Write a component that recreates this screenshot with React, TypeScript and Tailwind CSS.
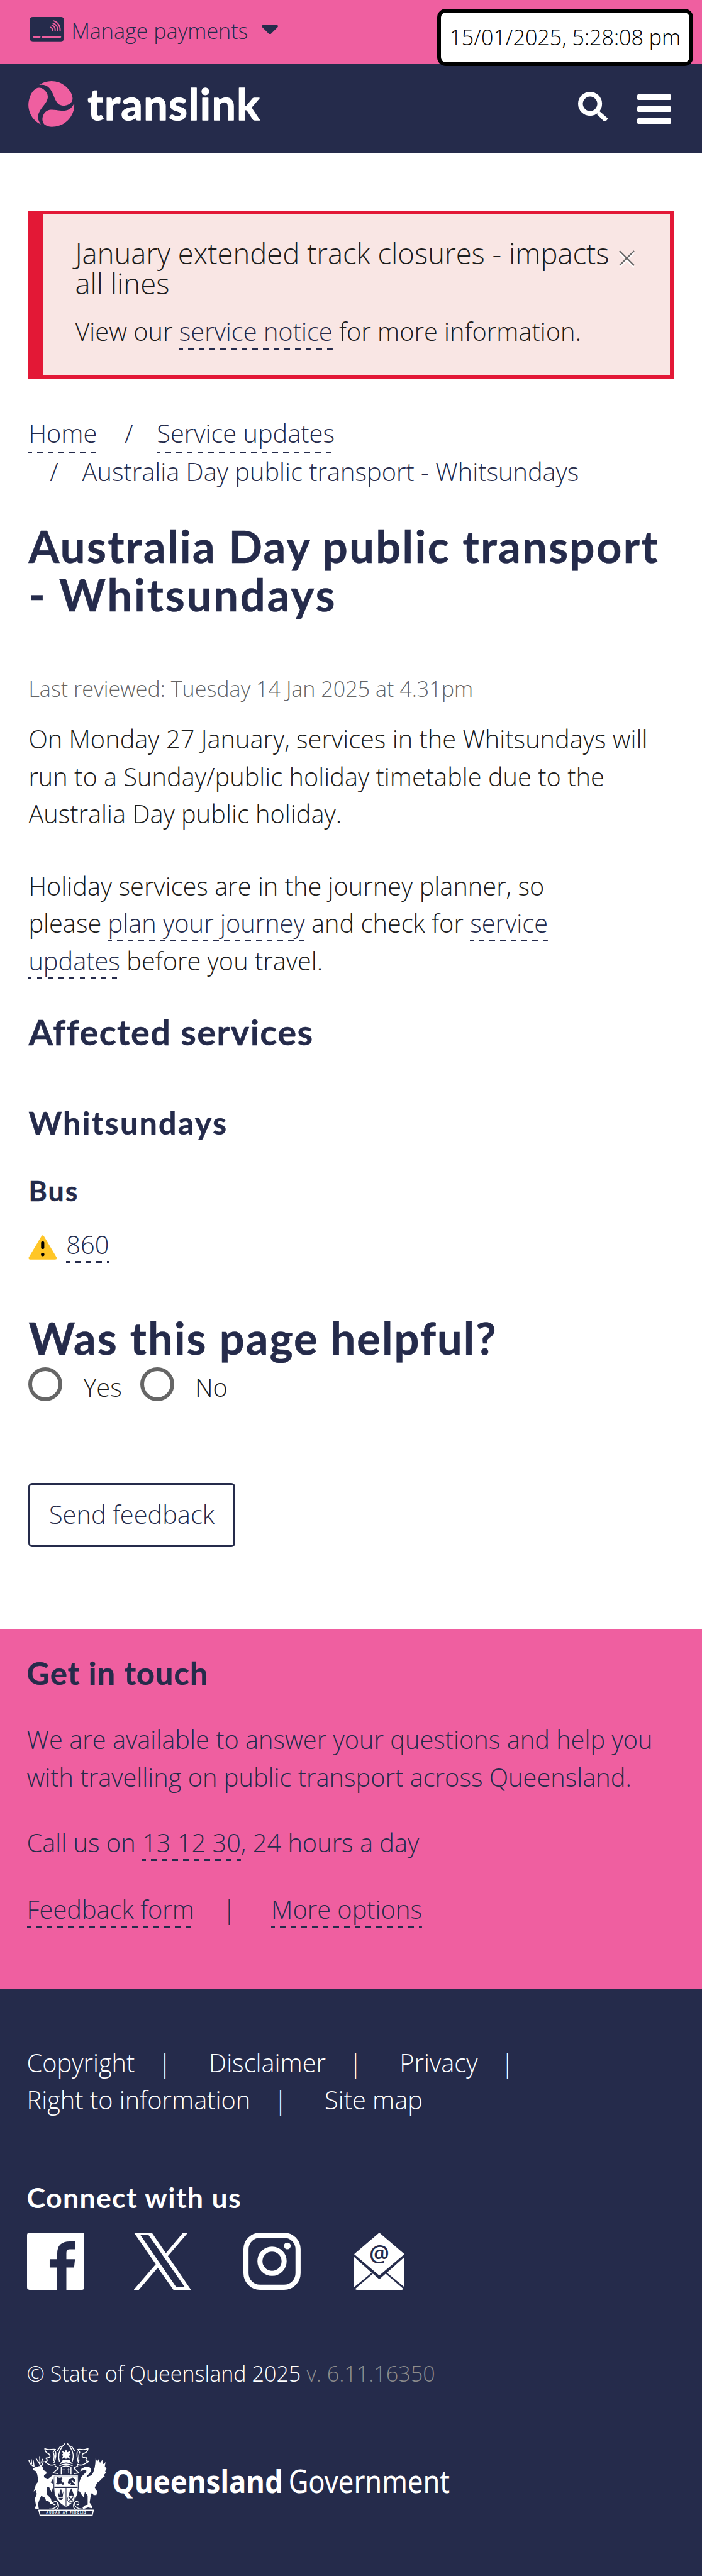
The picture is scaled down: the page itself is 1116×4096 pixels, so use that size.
import type { ReactNode } from "react";

function Link({ children }: { children: ReactNode }) {
  return (
    <a className="whitespace-nowrap bg-[repeating-linear-gradient(90deg,#252b4b_-2.8px_5.7px,transparent_5.7px_14.2px)] bg-[length:100%_3px] bg-bottom bg-no-repeat pb-[2px] text-[#252b4b]">
      {children}
    </a>
  );
}

function CardIcon() {
  return (
    <svg viewBox="0 0 175 123" className="mt-[27.2px] h-[38.8px] w-[55.2px] shrink-0">
      <rect width="175" height="123" rx="16" fill="#252b4b" />
      <g fill="none" stroke="#ef5fa0" strokeWidth="6" strokeLinecap="round">
        <path d="M21 101H52M64 101H156" strokeWidth="7" />
        <path d="M123 20C143 26 156 45 154 70M118 31C133 36 143 50 142 70M113 41C123 45 130 55 129 70M106 52C112 55 117 62 116 70" />
      </g>
    </svg>
  );
}

const BLADE = "M-62 -97C-22 -126 36 -122 72 -90C98 -66 107 -46 107 -27C106 -5 84 8 62 8C36 8 24 -10 14 -36C-2 -78 -18 -102 -62 -97Z";

function Logo() {
  return (
    <svg viewBox="0 0 390 80" className="h-[75.7px] w-[369.2px] overflow-visible" role="img">
      <g transform="translate(38.7 38.7) scale(0.333)" fill="#ef5fa0">
        <path d={BLADE} />
        <path d={BLADE} transform="rotate(120)" />
        <path d={BLADE} transform="rotate(240)" />
      </g>
      <text
        x="99.5"
        y="66"
        textLength="289"
        fontFamily="Lato, sans-serif"
        fontWeight="700"
        fontSize="72"
        fill="#fff"
        stroke="#fff"
        strokeWidth="1.4"
        strokeLinejoin="round"
      >
        translink
      </text>
    </svg>
  );
}

function Header() {
  return (
    <header>
      <div className="relative flex h-[102.2px] items-start bg-[#ef5fa0] pl-[47px] text-[#252b4b]">
        <CardIcon />
        <span className="ml-[11.2px] mt-[23.8px] text-[34.08px] leading-[51px]">Manage payments</span>
        <svg viewBox="0 0 83 46" className="ml-[21.8px] mt-[39.7px] h-[14.6px] w-[26.2px]">
          <path d="M5 0H78Q85 2 81 9L46 44Q41 48 37 44L2 9Q-2 2 5 0Z" fill="#252b4b" />
        </svg>
        <div className="absolute left-[694.8px] top-[14.2px] z-10 flex h-[90.9px] w-[407px] items-center justify-center whitespace-nowrap rounded-[14px] border-[6px] border-black bg-white pb-[1px] text-[34.08px] leading-[51px] text-black">
          15/01/2025, 5:28:08 pm
        </div>
      </div>
      <div className="flex h-[142px] items-start bg-[#252b4b] pl-[45.4px] pr-[49.2px]">
        <div className="mt-[27.2px]">
          <Logo />
        </div>
        <svg viewBox="0 0 150 150" className="ml-auto mt-[43.6px] h-[47.3px] w-[47.3px]">
          <circle cx="60.500" cy="60.500" r="48.500" fill="none" stroke="#fff" strokeWidth="24" />
          <path d="M107 97L150 134Q150 138 138 149Q134 152 130 148L97 115Q96 111 98 103Q103 98 107 97Z" fill="#fff" />
        </svg>
        <div className="ml-[47px] mt-[47.5px] flex w-[54px] flex-col gap-[10px]">
          <div className="h-[9.2px] rounded-[2px] bg-white" />
          <div className="h-[9.2px] rounded-[2px] bg-white" />
          <div className="h-[9.2px] rounded-[2px] bg-white" />
        </div>
      </div>
    </header>
  );
}

function Alert() {
  return (
    <section className="relative mt-[90.8px] h-[267px] border-[6px] border-l-[23px] border-[#e31836] bg-[#f9e6e4] pl-[51px] pt-[38.5px] text-[#1c1c1c]">
      <h2 className="whitespace-nowrap text-[45.44px] leading-[47.8px]">
        January extended track closures - impacts
        <br />
        all lines
      </h2>
      <p className="mt-[23px]">
        View our <Link>service notice</Link> for more information.
      </p>
      <svg viewBox="0 0 26 29" className="absolute right-[55.2px] top-[56.8px] h-[28px] w-[25px]">
        <path d="M1 4L25 28M25 4L1 28" stroke="#fff" strokeWidth="2.4" />
        <path d="M1 1L25 25M25 1L1 25" stroke="#666" strokeWidth="2.2" />
      </svg>
    </section>
  );
}

function WarningIcon() {
  return (
    <svg viewBox="0 0 48 41" className="mt-[14.200px] h-[38.8px] w-[45.7px]">
      <path d="M22 1.500Q24 -1 26 1.500L47.500 37.500Q48.500 41 45 41H3Q-.5 41 .5 37.500Z" fill="#ffc627" />
      <path d="M24 13V20.500" stroke="#000" strokeWidth="5.400" strokeLinecap="round" />
      <circle cx="24" cy="32.600" r="2.900" fill="#000" />
    </svg>
  );
}

function Radio({ label }: { label: string }) {
  return (
    <label className="flex items-start">
      <span className="h-[54px] w-[54px] rounded-full border-[6px] border-[#666]" />
      <span className="ml-[33px] mt-[3.5px]">{label}</span>
    </label>
  );
}

function Bar({ className }: { className: string }) {
  return <span className={className}>|</span>;
}

function CoatOfArms() {
  return (
    <svg viewBox="53 40 396 368" className="h-[116.2px] w-[125px] shrink-0" fill="#fff">
      <g fill="none" stroke="#fff" strokeWidth="5" strokeLinejoin="round">
        <path d="M90 164C72 158 60 146 56 128M70 148L68 124M82 158L78 130M108 164C122 160 128 150 128 132M116 158L104 136L92 120M112 148L110 108M118 140L126 122" />
        <path d="M190 148C170 160 150 148 136 134C150 136 152 128 142 118C160 116 168 112 158 98C144 92 136 84 136 70C150 80 168 72 190 74L178 88C186 100 184 116 180 132M190 84C196 102 190 122 182 142" />
        <path d="M300 148C318 160 338 148 358 134C344 134 338 128 348 116C330 118 318 112 328 96C344 92 354 84 354 68C340 80 322 72 302 74L312 88C304 100 306 116 308 132M300 84C294 102 300 122 306 142" />
        <path d="M210 135C202 110 208 82 222 62L238 44M274 135C284 110 278 82 264 62L250 44M198 82L214 60L228 56M288 82L272 60L258 56" />
        <path d="M212 146Q243 128 276 146M210 156Q243 140 276 156M186 156L206 168L178 192L204 196M304 156L282 168L308 192L284 196" />
        <path d="M219 200V164Q243 150 268 164V200" />
        <path d="M190 376C212 374 210 340 190 336C174 338 174 356 190 352M158 374C186 374 204 362 198 342M296 376C274 374 276 340 296 336C312 338 312 356 296 352M328 374C300 374 282 362 288 342" strokeWidth="4" />
        <path d="M106 380H381L375 405H112Z" />
      </g>
      <path d="M243 74L250 88L266 80L260 96L270 102L258 106L264 122L248 114L243 124L238 114L222 122L228 106L218 102L228 96L222 80L236 88Z" />
      <path d="M228 126H260L270 142Q243 130 216 142Z" />
      <path d="M232 168V192M225 177H239M256 168V192M249 177H263" fill="none" stroke="#fff" strokeWidth="3.500" />
      <path d="M78 168L92 163L108 158L126 164L128 178L144 186L144 196L132 204L132 214L152 222L178 202L180 216L166 240L188 252V272L178 262L170 290L158 264L148 262L146 300L166 320L170 334L180 346L166 350L156 336L142 332L138 318L118 308L108 330L102 348L106 374H90L86 366L92 358L86 322L96 298L90 280L80 286L92 250L104 234L98 200L92 184L76 178Z" />
      <path d="M314 184L322 170Q340 158 358 162Q374 170 368 186L350 206L344 214L372 204Q392 176 392 116L400 136L408 122L414 142L426 126L428 150L442 138L438 162L448 168L440 184L446 190L434 202L438 210L422 220L414 232L400 242L388 266L400 286L396 304L382 304L374 292L368 302L362 342L376 362L374 370L354 366L330 374L326 366L338 356L352 352L352 306L338 288L332 316L320 300L312 286L304 284L310 240L318 214L344 188Q350 176 334 178Z" />
      <path d="M178 202H304V266Q308 330 243 366Q178 330 182 266Z" stroke="#252b4b" strokeWidth="3" />
      <path d="M184 266H302M243 266V362" stroke="#252b4b" strokeWidth="3.500" />
      <path d="M184 208H298V262H184Z" fill="none" stroke="#8b8fa6" strokeWidth="2" />
      <g fill="#252b4b">
        <path d="M196 212Q206 220 222 214L226 222L218 228L224 240H230L234 250L226 252L218 244Q204 256 192 246L200 238Q192 228 198 222Z" />
        <path d="M252 240Q256 220 276 216Q292 220 290 236L282 240Q280 228 270 230Q274 240 286 246L290 256L266 252L268 242L256 248Z" />
        <path d="M202 284L210 304L212 276H220L222 304L230 284L226 314H206ZM206 318H228L222 328H210Z" />
        <path d="M270 270L284 308Q264 300 254 316L262 284Z" />
      </g>
      <circle cx="268" cy="325" r="18" stroke="#252b4b" strokeWidth="2.500" />
      <path d="M258 315L278 335M278 315L258 335" stroke="#252b4b" strokeWidth="5" />
      <text x="243" y="398" textAnchor="middle" fontFamily="Open Sans, sans-serif" fontSize="15" fontWeight="700" textLength="200">
        AUDAX AT FIDELIS
      </text>
    </svg>
  );
}

function SocialIcons() {
  return (
    <div className="mt-[32.2px] flex items-start">
      <svg viewBox="0 0 96 96" className="h-[90.9px] w-[90.9px]" fill="#fff">
        <path d="M4 0H92Q96 0 96 4V92Q96 96 92 96H66V58.700H79L80.500 44.500H66V34Q66 28 72 28H80.700V14.700H72Q50.700 14.500 50.700 35V44.500H38V58.700H50.700V96H4Q0 96 0 92V4Q0 0 4 0Z" />
      </svg>
      <svg viewBox="0 0 97 98" className="-mt-[0.9px] ml-[79.4px] h-[92.8px] w-[91.8px]" fill="#fff">
        <path
          fillRule="evenodd"
          d="M0 0H30L53.600 34.500L82.400 0H90.600L57 39.300L97 98H67.600L40 59L6.500 98H0V95.500L36.600 53ZM10.400 3.300H24L85.400 91.700H71Z"
        />
      </svg>
      <svg viewBox="0 0 96 96" className="ml-[82.8px] h-[90.9px] w-[90.9px]" fill="none" stroke="#fff">
        <rect x="4.300" y="4.300" width="87.400" height="87.400" rx="23.500" strokeWidth="8.600" />
        <circle cx="48" cy="48" r="20.300" strokeWidth="8.500" />
        <circle cx="73.700" cy="22.300" r="5.700" fill="#fff" stroke="none" />
      </svg>
      <svg viewBox="0 0 84.5 96" className="ml-[84.3px] h-[90.9px] w-[80px]" fill="#fff">
        <path d="M42.250 0L84.500 36.200L42.250 72L0 36.200ZM0 41L29.500 67.300L0 91.500ZM84.500 41L55 67.300L84.500 91.500ZM31.500 69L42.250 78.300L53 69L82.800 94.500Q82 96 80 96H4.500Q2.500 96 1.700 94.500Z" />
        <text x="42.250" y="48.500" textAnchor="middle" fontFamily="Open Sans, sans-serif" fontWeight="600" fontSize="37.500" fill="#252b4b">
          @
        </text>
      </svg>
    </div>
  );
}

export default function App() {
  return (
    <div className="flex h-[4096px] w-[1116px] flex-col overflow-hidden bg-white font-['Open_Sans',sans-serif] text-[39.76px] font-light leading-[59.63px] text-[#1c1c1c]">
      <Header />

      <main className="flex flex-col px-[45.4px]">
        <Alert />

        <nav className="mt-[57.6px] text-[#252b4b]">
          <div className="flex">
            <Link>Home</Link>
            <span className="ml-[44px] mr-[37.4px]">/</span>
            <Link>Service updates</Link>
          </div>
          <div className="flex whitespace-nowrap">
            <span className="ml-[33.8px] mr-[37.8px]">/</span>
            <span>Australia Day public transport - Whitsundays</span>
          </div>
        </nav>

        <h1 className="mt-[49.6px] whitespace-nowrap font-['Lato',sans-serif] text-[70.4px] font-bold leading-[76.4px] tracking-[0.0335em] text-[#252b4b] [-webkit-text-stroke:0.5px_#252b4b]">
          Australia Day public transport
          <br />
          <span className="tracking-[0.041em]">- Whitsundays</span>
        </h1>

        <p className="mt-[86.4px] text-[34.08px] leading-[51px] text-[#666]">
          Last reviewed: Tuesday 14 Jan 2025 at 4.31pm
        </p>
        <p className="mt-[25.3px] whitespace-nowrap">
          On Monday 27 January, services in the Whitsundays will
          <br />
          run to a Sunday/public holiday timetable due to the
          <br />
          Australia Day public holiday.
        </p>
        <p className="mt-[54.8px] whitespace-nowrap">
          Holiday services are in the journey planner, so
          <br />
          please <Link>plan your journey</Link> and check for <Link>service</Link>
          <br />
          <Link>updates</Link> before you travel.
        </p>

        <h2 className="mt-[52.9px] font-['Lato',sans-serif] text-[55.9px] font-bold leading-[60px] tracking-[0.025em] text-[#252b4b] [-webkit-text-stroke:0.4px_#252b4b]">
          Affected services
        </h2>
        <h3 className="mt-[87.1px] font-['Lato',sans-serif] text-[50.3px] font-bold leading-[54px] tracking-[0.044em] text-[#252b4b] [-webkit-text-stroke:0.4px_#252b4b]">
          Whitsundays
        </h3>
        <h4 className="mt-[56.2px] font-['Lato',sans-serif] text-[44.7px] font-bold leading-[48px] tracking-[0.045em] text-[#252b4b] [-webkit-text-stroke:0.4px_#252b4b]">
          Bus
        </h4>
        <div className="mt-[33.3px] flex h-[59.6px] gap-[14.2px]">
          <WarningIcon />
          <span>
            <Link>860</Link>
          </span>
        </div>

        <h2 className="mt-[79.6px] font-['Lato',sans-serif] text-[70.4px] font-bold leading-[76px] tracking-[0.0285em] text-[#252b4b] [-webkit-text-stroke:0.5px_#252b4b]">
          Was this page helpful?
        </h2>
        <div className="mt-[8.8px] flex h-[62.7px] gap-[29.2px]">
          <Radio label="Yes" />
          <Radio label="No" />
        </div>

        <button className="mt-[121.800px] flex h-[101.4px] w-[328.2px] items-center justify-center rounded-[6px] border-[3px] border-[#252b4b] text-[#252b4b]">
          Send feedback
        </button>
      </main>

      <section className="mt-[131.1px] h-[570.9px] bg-[#ef5fa0] px-[42.6px] pt-[42.3px] text-[#252b4b]">
        <h3 className="font-['Lato',sans-serif] text-[50.3px] font-bold leading-[54px] tracking-[0.022em] [-webkit-text-stroke:0.4px_#252b4b]">
          Get in touch
        </h3>
        <p className="mt-[49.7px] whitespace-nowrap">
          We are available to answer your questions and help you
          <br />
          with travelling on public transport across Queensland.
        </p>
        <p className="mt-[45.2px]">
          Call us on <Link>13 12 30</Link>, 24 hours a day
        </p>
        <div className="mt-[45.6px] flex">
          <span>
            <Link>Feedback form</Link>
          </span>
          <Bar className="ml-[44.6px] mr-[56.1px]" />
          <span>
            <Link>More options</Link>
          </span>
        </div>
      </section>

      <footer className="flex grow flex-col bg-[#252b4b] px-[42.6px] pt-[88.8px] text-white">
        <div className="flex">
          <span>Copyright</span>
          <Bar className="ml-[37px] mr-[59.2px]" />
          <span>Disclaimer</span>
          <Bar className="ml-[36.6px] mr-[59.2px]" />
          <span>Privacy</span>
          <Bar className="ml-[36.6px]" />
        </div>
        <div className="flex">
          <span>Right to information</span>
          <Bar className="ml-[37px] mr-[59.2px]" />
          <span>Site map</span>
        </div>

        <h4 className="mt-[100.4px] font-['Lato',sans-serif] text-[44.7px] font-bold leading-[48px] tracking-[0.029em]">
          Connect with us
        </h4>
        <SocialIcons />

        <p className="mt-[106.3px] text-[34.08px] leading-[51px]">
          © State of Queensland 2025 <span className="text-[#8c8c8c]">v. 6.11.16350</span>
        </p>

        <div className="ml-[2.6px] mt-[84.5px] flex items-start">
          <CoatOfArms />
          <svg
            viewBox="0 0 570 80"
            className="ml-[7.6px] mt-[27.3px] h-[75.7px] w-[539.5px] overflow-visible"
            fill="#fff"
            fontFamily="Noto Sans, sans-serif"
            fontSize="53"
          >
            <text x="0" y="56" fontWeight="700" textLength="287" lengthAdjust="spacingAndGlyphs">
              Queensland
            </text>
            <text x="296.500" y="56" fontWeight="400" textLength="271" lengthAdjust="spacingAndGlyphs">
              Government
            </text>
          </svg>
        </div>
      </footer>
    </div>
  );
}
